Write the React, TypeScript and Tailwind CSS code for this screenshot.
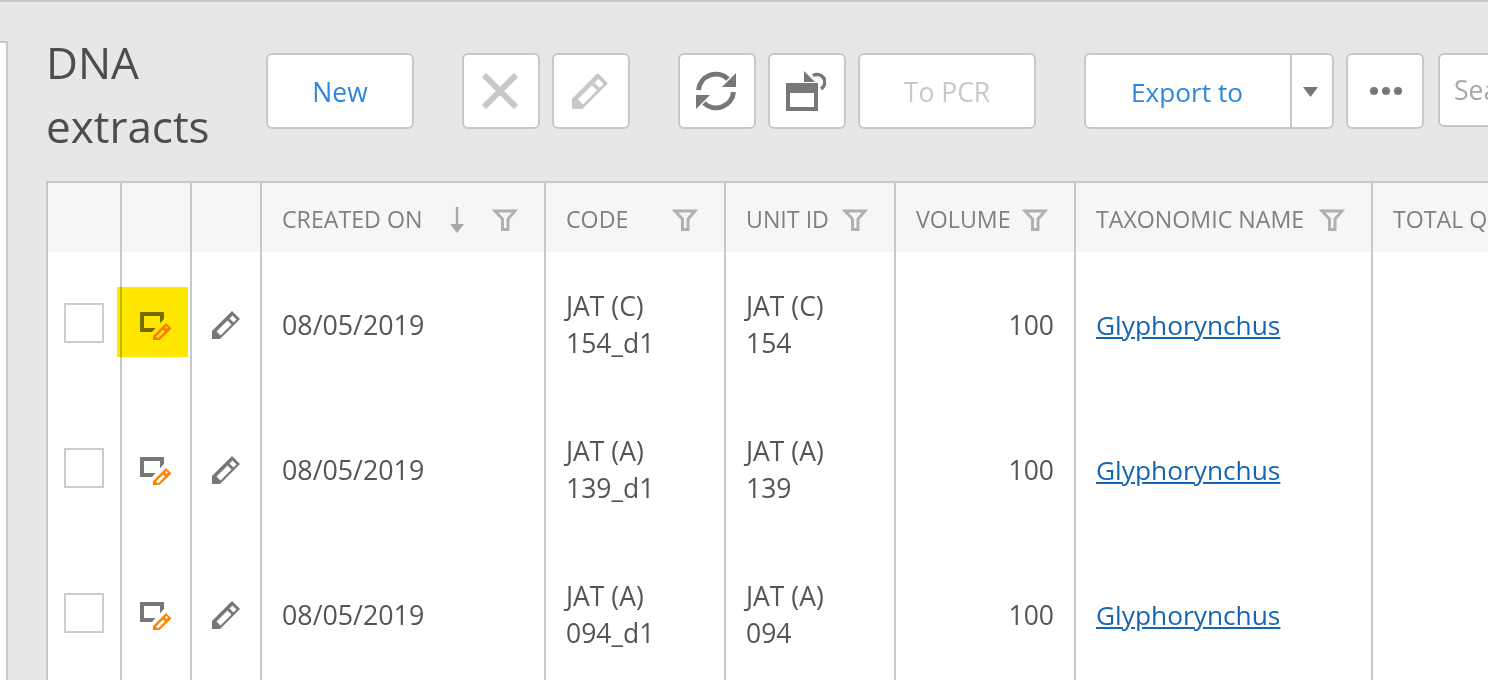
const rows = [
  { date: "08/05/2019", code: ["JAT (C)", "154_d1"], unit: ["JAT (C)", "154"], volume: "100", name: "Glyphorynchus" },
  { date: "08/05/2019", code: ["JAT (A)", "139_d1"], unit: ["JAT (A)", "139"], volume: "100", name: "Glyphorynchus" },
  { date: "08/05/2019", code: ["JAT (A)", "094_d1"], unit: ["JAT (A)", "094"], volume: "100", name: "Glyphorynchus" },
];

const btn = "flex h-[76px] shrink-0 items-center justify-center rounded-[6px] border-2 border-[#c8c8c8] bg-white";
const cell = "border-l-2 border-[#c8c8c8]";
const gridCols = "grid grid-cols-[74px_70px_70px_284px_180px_170px_180px_297px_1fr]";

const PENCIL =
  "M0 28V20L20 0L28 8L8 28ZM4.5 20.5L8.5 24.5L19.5 13.5L15.5 9.5ZM17.5 7.5L21.5 11.5L24.5 8.5L20.5 4.5Z";

function Pencil({ size, color }: { size: number; color: string }) {
  return (
    <svg width={size} height={size} viewBox="0 0 28 28">
      <path d={PENCIL} fill={color} fillRule="evenodd" />
    </svg>
  );
}

function EditBox() {
  return (
    <svg width="32" height="28" viewBox="0 0 32 28">
      <path d="M0 0H24V20H0ZM4 4V16H20V4Z" fill="#777777" fillRule="evenodd" />
      <path d="M11 30L11 21L24 7L34 17L20 30Z" fill="#ffffff" />
      <g transform="translate(13 11)">
        <path
          d="M0 18V13L13 0L18.5 5.5L5.5 18ZM3 13.5L5 15.5L12 8.5L10 6.5ZM12 4.5L13.5 6L15 4.5L13.5 3Z"
          fill="#ff8400"
          fillRule="evenodd"
        />
      </g>
    </svg>
  );
}

function Funnel() {
  return (
    <svg width="26" height="22" viewBox="0 0 26 22" fill="none" stroke="#b0b0b0" strokeWidth="3">
      <path d="M3 2H23L16 10V20.5H10.5V10Z" />
    </svg>
  );
}

function SortArrow() {
  return (
    <svg width="14" height="26" viewBox="0 0 14 26" className="mr-[28px]">
      <path d="M7 0V18" stroke="#a8a8a8" strokeWidth="2.5" />
      <path d="M0 17H14L7 26Z" fill="#a8a8a8" />
    </svg>
  );
}

function HeadCell({ label, filter = true, sort = false }: { label: string; filter?: boolean; sort?: boolean }) {
  return (
    <div className={`${cell} flex items-center overflow-hidden whitespace-nowrap bg-[#f6f6f6] pl-[20px] pr-[26px] pt-[4px] text-[23.2px] text-[#808080]`}>
      <span>{label}</span>
      <span className="ml-auto flex items-center">
        {sort && <SortArrow />}
        {filter && <Funnel />}
      </span>
    </div>
  );
}

function Lines({ lines }: { lines: string[] }) {
  return (
    <div className={`${cell} flex flex-col justify-center pl-[20px] leading-[37px]`}>
      {lines.map((line) => (
        <span key={line}>{line}</span>
      ))}
    </div>
  );
}

export default function App() {
  return (
    <div
      className="relative flex h-[680px] w-[1488px] overflow-hidden border-t-2 border-[#c8c8c8] bg-[#e7e7e7] text-[#555555]"
      style={{ fontFamily: '"Open Sans", "Noto Sans", sans-serif' }}
    >
      {/* left panel edge */}
      <div className="mt-[39px] h-full w-[8px] shrink-0 border-r-2 border-t-2 border-[#c8c8c8] bg-white" />

      <div className="flex min-w-0 flex-1 flex-col pl-[38px]">
        <div className="flex h-[179px] shrink-0 pt-[51px]">
          <h1 className="-mt-[23px] w-[220px] shrink-0 text-[44px] font-normal leading-[64px] text-[#4d4d4d]">
            DNA extracts
          </h1>
          <button className={`${btn} w-[148px] pt-[4px] text-[26.5px] text-[#2f86dd]`}>New</button>
          <button className={`${btn} ml-[48px] w-[78px] pr-[2px]`}>
            <svg width="36" height="36" viewBox="0 0 36 36" stroke="#c8c8c8" strokeWidth="6">
              <path d="M2 2L34 34M34 2L2 34" />
            </svg>
          </button>
          <button className={`${btn} ml-[12px] w-[78px] pr-[2px]`}>
            <Pencil size={36} color="#c8c8c8" />
          </button>
          <button className={`${btn} ml-[48px] w-[78px] pr-[2px]`}>
            <svg width="40" height="40" viewBox="0 0 40 40">
              <path d="M2.5 19A17.5 17.5 0 0 1 32 8" fill="none" stroke="#777777" strokeWidth="5" />
              <path d="M37.5 21A17.5 17.5 0 0 1 8 32" fill="none" stroke="#777777" strokeWidth="5" />
              <path d="M40 2V16H26Z" fill="#777777" />
              <path d="M0 38V24H14Z" fill="#777777" />
            </svg>
          </button>
          <button className={`${btn} ml-[12px] w-[78px] pr-[2px]`}>
            <svg width="40" height="40" viewBox="0 0 40 40">
              <path d="M0 12H32V40H0ZM4 22V36H28V22Z" fill="#777777" fillRule="evenodd" />
              <path d="M18 0V11H29Z" fill="#777777" />
              <path d="M27 4.5A7.8 7.8 0 0 1 35 18" fill="none" stroke="#777777" strokeWidth="3.5" />
            </svg>
          </button>
          <button className={`${btn} ml-[12px] w-[178px] pt-[4px] text-[26.5px] text-[#c8c8c8]`}>To PCR</button>
          <div className={`${btn} ml-[48px] w-[250px]`}>
            <button className="flex h-full flex-1 items-center justify-center pr-[2px] pt-[4px] text-[26.2px] text-[#2f86dd]">Export to</button>
            <button className="flex h-full w-[42px] items-center justify-center border-l-2 border-[#c8c8c8] pr-[4px] pt-[1px]">
              <svg width="15" height="10" viewBox="0 0 15 10">
                <path d="M0 0H15L7.5 10Z" fill="#777777" />
              </svg>
            </button>
          </div>
          <button className={`${btn} ml-[12px] w-[78px] gap-[4px] pl-[1px]`}>
            <span className="h-[8px] w-[8px] rounded-full bg-[#777777]" />
            <span className="h-[8px] w-[8px] rounded-full bg-[#777777]" />
            <span className="h-[8px] w-[8px] rounded-full bg-[#777777]" />
          </button>
          <input
            placeholder="Search"
            className="ml-[14px] h-[74px] w-[240px] shrink-0 rounded-[6px] border-2 border-[#c8c8c8] bg-white pl-[14px] text-[26.5px] placeholder:text-[#a8a8a8]"
          />
        </div>

        {/* table */}
        <div className="w-[1600px] border-t-2 border-[#c8c8c8] bg-white text-[26.5px]">
          <div className={`${gridCols} h-[69px]`}>
            <div className={`${cell} bg-[#f6f6f6]`} />
            <div className={`${cell} bg-[#f6f6f6]`} />
            <div className={`${cell} bg-[#f6f6f6]`} />
            <HeadCell label="CREATED ON" sort />
            <HeadCell label="CODE" />
            <HeadCell label="UNIT ID" />
            <HeadCell label="VOLUME" />
            <HeadCell label="TAXONOMIC NAME" />
            <HeadCell label="TOTAL QUANTITY" filter={false} />
          </div>
          {rows.map((row) => (
            <div key={row.code[1]} className={`${gridCols} h-[145px]`}>
              <div className={`${cell} flex items-center justify-center`}>
                <div className="mb-[4px] h-[40px] w-[40px] border-2 border-[#cccccc] bg-white" />
              </div>
              <div className={`${cell} flex items-center justify-center`}>
                <div className="mt-[2px]">
                  <EditBox />
                </div>
              </div>
              <div className={`${cell} flex items-center justify-center`}>
                <Pencil size={28} color="#777777" />
              </div>
              <div className={`${cell} flex items-center pl-[20px] pt-[2px] text-[26.8px]`}>{row.date}</div>
              <Lines lines={row.code} />
              <Lines lines={row.unit} />
              <div className={`${cell} flex items-center justify-end pr-[20px] pt-[2px]`}>{row.volume}</div>
              <div className={`${cell} flex items-center pl-[20px] pt-[2px]`}>
                <a className="text-[26.3px] text-[#1565b0] underline">{row.name}</a>
              </div>
              <div className={cell} />
            </div>
          ))}
        </div>
      </div>

      {/* highlight marker over the first row's edit icon */}
      <div className="absolute left-[117px] top-[285px] h-[70px] w-[71px] bg-[#ffe600] mix-blend-multiply" />
    </div>
  );
}
